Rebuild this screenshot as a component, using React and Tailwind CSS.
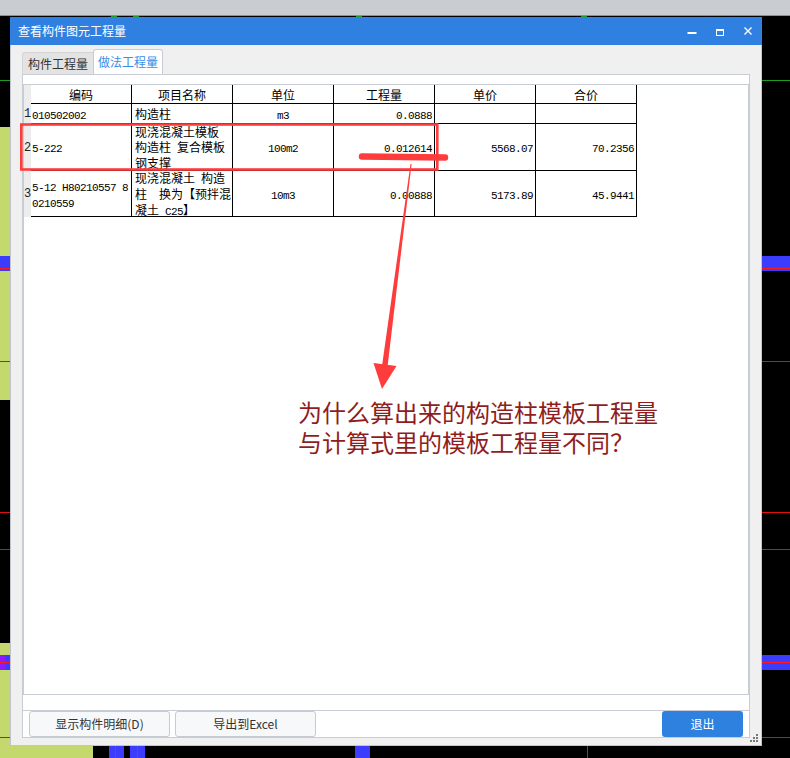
import React from 'react';

const cjk = "font-['Noto_Sans_CJK_SC',sans-serif]";

// SimSun-like half width text (6px per char)
function M({ children }) {
  return (
    <span className="font-['Liberation_Mono',monospace] text-[11px] leading-none tracking-[-0.6px]">{children}</span>
  );
}

const cols = [
  { label: '编码', cell: 'justify-start pl-[1px] text-left' },
  { label: '项目名称', cell: 'justify-start pl-[3px] text-left' },
  { label: '单位', cell: 'justify-center text-center' },
  { label: '工程量', cell: 'justify-end pr-[2px] text-right' },
  { label: '单价', cell: 'justify-end pr-[2px] text-right' },
  { label: '合价', cell: 'justify-end pr-[2px] text-right' },
];

const rows = [
  {
    n: '1',
    h: 'h-[20px]',
    cells: [<M>010502002</M>, '构造柱', <M>m3</M>, <M>0.0888</M>, '', ''],
  },
  {
    n: '2',
    h: 'h-[47px]',
    cells: [
      <M>5-222</M>,
      <>现浇混凝土模板<br />构造柱<M> </M>复合模板<br />钢支撑</>,
      <M>100m2</M>,
      <M>0.012614</M>,
      <M>5568.07</M>,
      <M>70.2356</M>,
    ],
  },
  {
    n: '3',
    h: 'h-[46px]',
    cells: [
      <><M>5-12 H80210557 8</M><br /><M>0210559</M></>,
      <>现浇混凝土<M> </M>构造<br />柱<M>  </M>换为【预拌混<br />凝土<M> C25</M>】</>,
      <M>10m3</M>,
      <M>0.00888</M>,
      <M>5173.89</M>,
      <M>45.9441</M>,
    ],
  },
];

function Grid() {
  return (
    <div className="h-[611px] border border-[#c8ccd4] bg-white text-black">
      {/* header */}
      <div className="flex h-[19px]">
        <div className="w-[7px] shrink-0 bg-[#ededed]" />
        {cols.map((c) => (
          <div
            key={c.label}
            className="flex w-[101px] shrink-0 items-center justify-center border-r border-b border-black text-[12px] leading-[15px]"
          >
            {c.label}
          </div>
        ))}
      </div>
      {rows.map((r) => (
        <div key={r.n} className={`flex ${r.h}`}>
          <div className="flex w-[7px] shrink-0 items-center overflow-hidden bg-[#ededed] font-['Liberation_Mono',monospace] text-[12px] leading-[14px] text-[#222]">
            {r.n}
          </div>
          {r.cells.map((v, i) => (
            <div
              key={i}
              className={`flex w-[101px] shrink-0 items-center border-r border-b border-black text-[12px] leading-[15px] whitespace-pre ${cols[i].cell}`}
            >
              <div>{v}</div>
            </div>
          ))}
        </div>
      ))}
    </div>
  );
}

function Dialog() {
  return (
    <div className={`absolute left-[10px] top-[17px] flex w-[752px] flex-col ${cjk}`}>
      {/* title bar */}
      <div className="flex h-[28px] items-center bg-[#2f80e1] pl-[8px] text-white">
        <span className="flex-1 text-[12px]">查看构件图元工程量</span>
        <div className="flex h-full w-[28px] items-center justify-center">
          <svg width="10" height="10" viewBox="0 0 10 10">
            <rect x="0.5" y="6" width="9" height="2" fill="white" />
          </svg>
        </div>
        <div className="flex h-full w-[28px] items-center justify-center">
          <svg width="10" height="10" viewBox="0 0 10 10">
            <rect x="1.5" y="3.5" width="7" height="6" stroke="white" fill="none" />
            <rect x="1" y="3" width="8" height="2" fill="white" />
          </svg>
        </div>
        <div className="flex h-full w-[28px] items-center justify-center">
          <svg width="10" height="10" viewBox="0 0 10 10">
            <path d="M1.5 1.5 L8.5 8.5 M8.5 1.5 L1.5 8.5" stroke="white" strokeWidth="1.4" />
          </svg>
        </div>
      </div>

      {/* body */}
      <div className="relative flex flex-col border-x border-b border-[#bfc5ce] bg-[#f0f0f0] px-[11px] pb-[7px]">
        {/* tabs */}
        <div className="flex h-[29px] items-end pt-[4px]">
          <div className="flex h-[22px] w-[71px] items-center justify-center rounded-tl-[3px] border-t border-l border-[#d4d4d4] bg-[#e3e3e3] text-[12px] text-[#333]">
            构件工程量
          </div>
          <div className="flex h-[25px] w-[70px] items-center justify-center rounded-t-[3px] border-x border-t border-[#c8ccd4] bg-white text-[12px] text-[#3a8ce6]">
            做法工程量
          </div>
        </div>

        {/* panel */}
        <div className="flex flex-col border border-[#c8ccd4] bg-white pt-[9px]">
          <Grid />
          <div className="h-[15px]" />
          <div className="flex h-[27px] items-stretch border-t border-[#c8ccd4] pl-[6px] pr-[6px]">
            <button className="w-[141px] rounded-[3px] border border-[#c5cad3] bg-[#f7f8fa] text-[12px] text-[#333]">
              显示构件明细(D)
            </button>
            <button className="ml-[5px] w-[141px] rounded-[3px] border border-[#c5cad3] bg-[#f7f8fa] text-[12px] text-[#333]">
              导出到Excel
            </button>
            <div className="flex-1" />
            <button className="w-[81px] rounded-[3px] bg-[#2f81e0] text-[12px] text-white">退出</button>
          </div>
        </div>

        {/* resize grip */}
        <svg className="absolute right-[3px] bottom-[3px]" width="8" height="8" viewBox="0 0 8 8">
          <rect x="6" y="0" width="2" height="2" fill="#777" />
          <rect x="3" y="3" width="2" height="2" fill="#777" />
          <rect x="6" y="3" width="2" height="2" fill="#777" />
          <rect x="0" y="6" width="2" height="2" fill="#777" />
          <rect x="3" y="6" width="2" height="2" fill="#777" />
          <rect x="6" y="6" width="2" height="2" fill="#777" />
        </svg>
      </div>
    </div>
  );
}

// CAD drawing behind the dialog, laid out as strips
function LeftStrip() {
  return (
    <div className="flex w-[10px] shrink-0 flex-col">
      <div className="h-[64px] bg-black" />
      <div className="h-px bg-[#1e9e1e]" />
      <div className="h-[46px] bg-black" />
      <div className="h-[129px] bg-[#c3d96d]" />
      <div className="h-[12px] bg-[#3c3cff]" />
      <div className="h-px bg-[#ff1a1a]" />
      <div className="h-[2px] bg-[#3c3cff]" />
      <div className="h-[90px] bg-[#c3d96d]" />
      <div className="h-px bg-[#e01010]" />
      <div className="h-[38px] bg-[#c3d96d]" />
      <div className="h-[112px] bg-black" />
      <div className="h-px bg-[#e01010]" />
      <div className="h-[36px] bg-black" />
      <div className="h-px bg-[#e01010]" />
      <div className="h-[93px] bg-black" />
      <div className="h-[12px] bg-[#c3d96d]" />
      <div className="flex h-[15px] flex-col bg-[linear-gradient(to_right,#8a1cff_50%,#3c3cff_50%)]">
        <div className="h-[7px]" />
        <div className="h-px bg-[#ff1a1a]" />
      </div>
      <div className="h-[67px] bg-[#c3d96d]" />
      <div className="h-px bg-[#e01010]" />
      <div className="flex-1 bg-[#c3d96d]" />
    </div>
  );
}

function RightStrip() {
  return (
    <div className="flex w-[28px] shrink-0 flex-col bg-black">
      <div className="h-[64px]" />
      <div className="h-px bg-[#1e9e1e]" />
      <div className="h-[175px]" />
      <div className="h-[12px] bg-[#3c3cff]" />
      <div className="h-px bg-[#ff1a1a]" />
      <div className="h-[2px] bg-[#3c3cff]" />
      <div className="h-[90px]" />
      <div className="h-px bg-[#e01010]" />
      <div className="h-[150px]" />
      <div className="h-px bg-[#e01010]" />
      <div className="h-[36px]" />
      <div className="h-px bg-[#e01010]" />
      <div className="h-[105px]" />
      <div className="h-[7px] bg-[#3c3cff]" />
      <div className="h-px bg-[#ff1a1a]" />
      <div className="h-[7px] bg-[#3c3cff]" />
      <div className="h-[67px]" />
      <div className="h-px bg-[#e01010]" />
    </div>
  );
}

function Center() {
  return (
    <div className="flex flex-1 flex-col bg-black">
      <div className="flex h-[2px]">
        <div className="w-[101px]" />
        <div className="w-[6px] bg-[#1e9e1e]" />
        <div className="w-[16px]" />
        <div className="w-[6px] bg-[#1e9e1e]" />
        <div className="w-[217px]" />
        <div className="w-[6px] bg-[#1e9e1e]" />
        <div className="w-[219px]" />
        <div className="w-[6px] bg-[#1e9e1e]" />
      </div>
      <div className="flex-1" />
      <div className="flex h-[13px]">
        <div className="w-[83px] bg-[#c3d96d]" />
        <div className="w-[16px]" />
        <div className="w-[6px] bg-[#3c3cff]" />
        <div className="w-px bg-[#ff1a1a]" />
        <div className="w-[8px] bg-[#3c3cff]" />
        <div className="w-[6px]" />
        <div className="w-[7px] bg-[#3c3cff]" />
        <div className="w-px bg-[#ff1a1a]" />
        <div className="w-[7px] bg-[#3c3cff]" />
        <div className="w-[210px]" />
        <div className="w-[15px] bg-[#3c3cff]" />
        <div className="w-[217px]" />
        <div className="w-px bg-[#e01010]" />
      </div>
    </div>
  );
}

function Annotation() {
  return (
    <>
      <svg className="pointer-events-none absolute left-0 top-0" width="790" height="758" viewBox="0 0 790 758">
        <rect x="21.3" y="124.5" width="416" height="45" fill="none" stroke="#ff3c3c" strokeWidth="2.6" />
        <line x1="362" y1="156.5" x2="445" y2="157.5" stroke="#ff3c3c" strokeWidth="6.5" strokeLinecap="round" />
        <polygon points="410.5,164 411.6,164 387.6,366 382,366" fill="#ff3c3c" />
        <polygon points="373.5,363 396.5,366 382,389" fill="#ff3c3c" />
      </svg>
      <div className={`pointer-events-none absolute left-[298px] top-[397px] text-[24px] leading-[30px] text-[#8f1d1d] ${cjk}`}>
        为什么算出来的构造柱模板工程量
        <br />
        与计算式里的模板工程量不同？
      </div>
    </>
  );
}

export default function App() {
  return (
    <div className="relative flex h-[758px] w-[790px] flex-col overflow-hidden bg-black">
      <div className="h-[15px] shrink-0 bg-[#c9ccd0]" />
      <div className="h-px shrink-0 bg-[#8d9096]" />
      <div className="flex flex-1">
        <LeftStrip />
        <Center />
        <RightStrip />
      </div>
      <Dialog />
      <Annotation />
    </div>
  );
}
